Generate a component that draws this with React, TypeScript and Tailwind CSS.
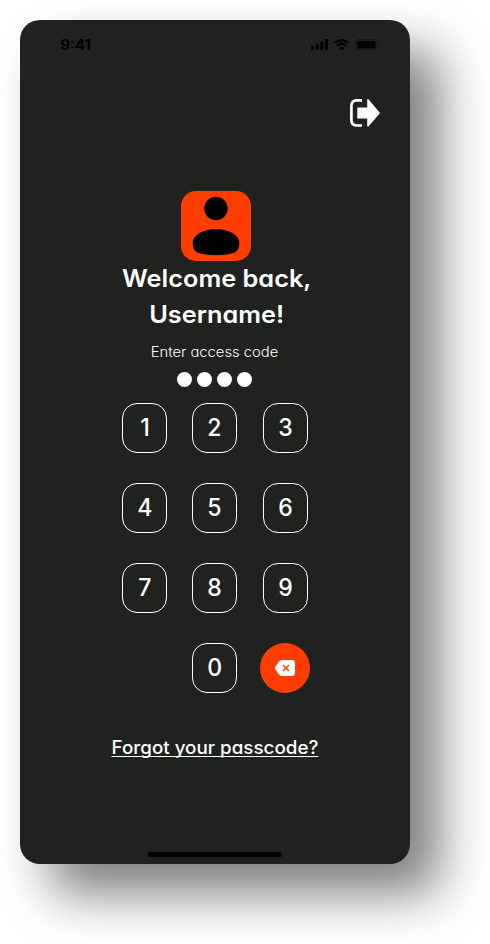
import type { ReactNode } from "react";

function Key({ children }: { children: ReactNode }) {
  return (
    <button className="flex h-[50px] w-[45px] items-center justify-center rounded-[15px] border border-white text-2xl font-[460]">
      <span className="scale-x-[0.96]">{children}</span>
    </button>
  );
}

function StatusBar() {
  return (
    <header className="flex h-[47px] shrink-0 items-center justify-between pr-[30px] pl-[40.5px] pt-[3px] text-black">
      <span className="text-[15px] font-semibold leading-5">9:41</span>
      <svg width="69" height="12" viewBox="0 0 69 12" fill="currentColor">
        <rect x="0" y="7" width="3" height="4" rx="1" />
        <rect x="4.7" y="5" width="3" height="6" rx="1" />
        <rect x="9.3" y="2.5" width="3" height="8.5" rx="1" />
        <rect x="14" y="0" width="3" height="11" rx="1" />
        <path d="M30.7 2.3c2.1 0 4.2.8 5.7 2.3l.4 0 1.2-1.2v-.4a10.6 10.6 0 0 0-14.6 0v.4l1.2 1.2h.4a8.2 8.2 0 0 1 5.7-2.3Z" />
        <path d="M30.7 6c1.2 0 2.3.4 3.1 1.2h.5l1.2-1.2v-.5a7 7 0 0 0-9.6 0V6l1.2 1.2h.5A4.6 4.6 0 0 1 30.7 6Z" />
        <path d="M33 8.7a3.6 3.6 0 0 0-4.6 0v.5l2 2h.6l2-2Z" />
        <rect x="45" y=".5" width="21" height="10.5" rx="2.5" fill="none" stroke="currentColor" opacity=".35" />
        <rect x="46.5" y="2" width="18" height="7.5" rx="1.3" />
        <path d="M67.3 4v4c1.7-.7 1.7-3.3 0-4Z" opacity=".4" />
      </svg>
    </header>
  );
}

function ExitIcon() {
  return (
    <svg width="30" height="29" viewBox="0 0 30 29">
      <path d="M12 2.3H6.5Q1.4 2.5 1.4 8v14q0 5.300 5 5.500H12" fill="none" stroke="white" strokeWidth="2.700" />
      <path d="M7.300 9.500h9.900V2.200q0-1.900 1.500-.8L30 15 18.700 28.200q-1.500 1.100-1.500-.8V20.500H7.300Z" fill="white" />
    </svg>
  );
}

export default function App() {
  return (
    <div className="h-[944px] w-[490px] overflow-hidden bg-white p-5 font-['Inter',sans-serif] [font-feature-settings:'cv11']">
      <main className="flex h-[844px] w-[390px] flex-col rounded-[20px] bg-[#20221f] text-white shadow-[30px_30px_50px_rgba(0,0,0,0.5)]">
        <StatusBar />
        <div className="flex justify-end pt-[31px] pr-[30px]">
          <button aria-label="Log out"><ExitIcon /></button>
        </div>
        <section className="mt-[64px] flex flex-col items-center">
          <div className="ml-[2px] size-[70px] rounded-[15px] bg-[#ff3d00]">
            <svg width="70" height="70" viewBox="0 0 70 70">
              <circle cx="35" cy="17.5" r="11.7" />
              <path d="M35 38C48 38 58.300 44.500 58.300 51.500C58.300 60 55.500 64 35 64S11.700 60 11.700 51.500C11.700 44.500 22 38 35 38Z" />
            </svg>
          </div>
          <h1 className="ml-[3px] scale-x-[1.055] text-center text-2xl leading-9 font-semibold">
            Welcome back,<br />Username!
          </h1>
          <p className="mt-2 mr-px scale-x-[1.055] text-sm leading-[21px] font-light">Enter access code</p>
          <div className="mt-[10px] mr-px flex gap-[5px]">
            {[0, 1, 2, 3].map((dot) => (
              <span key={dot} className="size-[15px] rounded-full bg-white" />
            ))}
          </div>
        </section>
        <section className="mt-4 ml-[102px] grid w-[186px] grid-cols-[45px_46px_45px] gap-x-[25px] gap-y-[30px]">
          {[1, 2, 3, 4, 5, 6, 7, 8, 9].map((digit) => <Key key={digit}>{digit}</Key>)}
          <span />
          <Key>0</Key>
          <button aria-label="Delete" className="-ml-[3px] flex size-[50px] items-center justify-center rounded-full bg-[#ff3d00]">
            <svg width="20" height="16" viewBox="0 0 20 16">
              <path d="M7 0H17Q20 0 20 3V13Q20 16 17 16H7Q5 16 4 14.500L.500 9.500Q-.500 8 .500 6.500L4 1.500Q5 0 7 0Z" fill="white" />
              <path d="m8 5 6 6m0-6-6 6" stroke="#ff3d00" strokeWidth="1.500" />
            </svg>
          </button>
        </section>
        <a href="#passcode" className="mt-[41px] mr-px scale-x-[1.045] self-center text-lg leading-[27px] font-[460] underline decoration-1 underline-offset-2 [text-decoration-skip-ink:none]">
          Forgot your passcode?
        </a>
        <div className="mt-auto mb-[7px] h-[5px] w-[134px] self-center rounded-full bg-black" />
      </main>
    </div>
  );
}
